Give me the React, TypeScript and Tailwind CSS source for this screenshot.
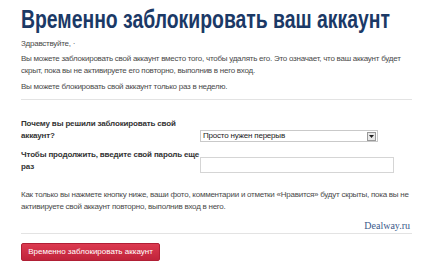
export default function App() {
  return (
    <div className="w-[434px] h-[275px] bg-white overflow-hidden font-['Liberation_Sans',Arial,sans-serif] text-[#4a4a4a]">
      <div className="ml-[21px] w-[391px] pt-[4px]">
        <h1 className="h-[30px] text-[25px] leading-[30px] font-bold text-[#1b3966] whitespace-nowrap">
          <span className="inline-block origin-left scale-x-[0.775]">Временно заблокировать ваш аккаунт</span>
        </h1>

        <div className="mt-[4px] text-[8px] leading-[12px] tracking-[-0.25px]">
          <p>Здравствуйте, ·</p>
          <p className="mt-[3px]">
            Вы можете заблокировать свой аккаунт вместо того, чтобы удалять его. Это означает, что ваш аккаунт будет
            скрыт, пока вы не активируете его повторно, выполнив в него вход.
          </p>
          <p className="mt-[4px]">Вы можете блокировать свой аккаунт только раз в неделю.</p>
        </div>

        <div className="mt-[6px] border-t border-[#e3e3e3]" />

        <div className="mt-[18px] flex flex-col gap-[7px] text-[8px] leading-[12px]">
          <div className="flex items-end">
            <div className="w-[179px] font-bold text-[#333] tracking-[-0.15px]">Почему вы решили заблокировать свой аккаунт?</div>
            <div className="flex items-center w-[178px] h-[12px] border border-[#c9c9c9] bg-white">
              <span className="flex-1 pl-[2px] leading-[10px] text-[#222] tracking-[-0.2px]">Просто нужен перерыв</span>
              <span className="flex items-center justify-center w-[9px] h-[9px] mr-[1px] border border-[#999] bg-[#e8e8e8]">
                <svg width="5" height="3" viewBox="0 0 5 3">
                  <path d="M0 0h5L2.5 3z" fill="#222" />
                </svg>
              </span>
            </div>
          </div>
          <div className="flex items-start">
            <div className="w-[179px] font-bold text-[#333] tracking-[-0.15px]">Чтобы продолжить, введите свой пароль еще раз</div>
            <div className="w-[194px] h-[16px] mt-[8px] border border-[#d5d5d5] bg-white" />
          </div>
        </div>

        <p className="mt-[16px] text-[8px] leading-[12px] tracking-[-0.25px]">
          Как только вы нажмете кнопку ниже, ваши фото, комментарии и отметки «Нравится» будут скрыты, пока вы не
          активируете свой аккаунт повторно, выполнив вход в него.
        </p>

        <div className="mt-[7px] pr-[2px] text-right font-['Liberation_Serif',serif] text-[10px] leading-[12px] text-[#3b5a8a]">
          Dealway.ru
        </div>
        <div className="mt-[1px] border-t border-[#e3e3e3]" />

        <button className="mt-[9px] h-[18px] w-[139px] rounded-[2px] border border-[#b01f35] bg-gradient-to-b from-[#dc3a50] to-[#c0233b] text-white text-[8px] leading-[16px] text-center">
          Временно заблокировать аккаунт
        </button>
      </div>
    </div>
  );
}
